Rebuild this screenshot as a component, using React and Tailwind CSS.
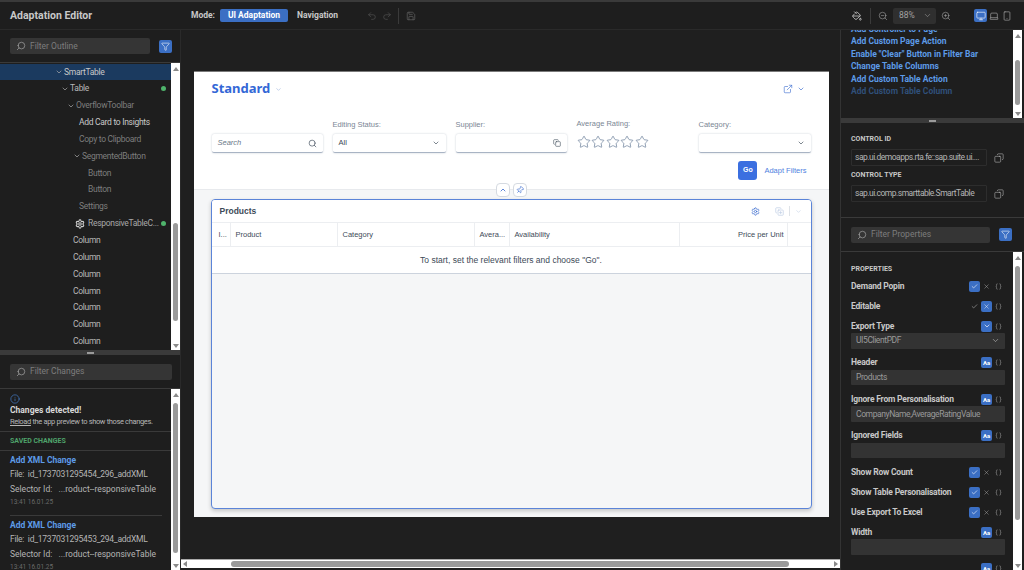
import {
  Braces,
  Check,
  ChevronDown,
  ChevronUp,
  Copy,
  ExternalLink,
  Filter,
  Info,
  Laptop,
  Monitor,
  PaintBucket,
  Pin,
  Redo2,
  Save,
  Search,
  Settings,
  Smartphone,
  Star,
  Undo2,
  X,
  ZoomIn,
  ZoomOut,
  CopyPlus
} from "lucide-react";

function ScrollV({ before, thumb, className = "" }) {
  return (
    <div className={`w-[9px] shrink-0 bg-white flex flex-col items-center ${className}`}>
      <div className="h-0 w-0 mt-[4px] border-x-[3px] border-x-transparent border-b-[4px] border-b-[#8a8a8a]" />
      <div className="shrink-0" style={{ height: before }} />
      <div className="w-[5px] rounded-full bg-[#9a9a9a] shrink-0" style={{ height: thumb }} />
      <div className="flex-1" />
      <div className="h-0 w-0 mb-[2px] border-x-[3px] border-x-transparent border-t-[4px] border-t-[#8a8a8a]" />
    </div>
  );
}

function Splitter() {
  return (
    <div className="h-[5px] shrink-0 bg-[#3a3a3a] flex items-center justify-center">
      <div className="w-[7px] h-[2px] bg-[#9a9a9a]" />
    </div>
  );
}

function FilterInput({ label, className = "" }) {
  return (
    <div className={`h-[16px] bg-[#353535] rounded-[2px] flex items-center gap-[4px] pl-[6px] ${className}`}>
      <Search size={10} strokeWidth={1.5} className="text-[#b0b0b0] -scale-x-100" />
      <span className="text-[8.5px] text-[#7d7d7d]">{label}</span>
    </div>
  );
}

function FunnelButton() {
  return (
    <div className="w-[13px] h-[13px] rounded-[2px] bg-[#3b6fc4] flex items-center justify-center">
      <Filter size={9} strokeWidth={1.5} className="text-white" />
    </div>
  );
}

const treeRows = [
  { text: "SmartTable", pad: 55, chev: true, active: true, color: "text-[#c8c8c8]" },
  { text: "Table", pad: 61, chev: true, dot: true, color: "text-[#b8b8b8]" },
  { text: "OverflowToolbar", pad: 67, chev: true, color: "text-[#7d7d7d]" },
  { text: "Add Card to Insights", pad: 79, color: "text-[#c8c8c8]" },
  { text: "Copy to Clipboard", pad: 79, color: "text-[#7d7d7d]" },
  { text: "SegmentedButton", pad: 73, chev: true, color: "text-[#7d7d7d]" },
  { text: "Button", pad: 88, color: "text-[#7d7d7d]" },
  { text: "Button", pad: 88, color: "text-[#7d7d7d]" },
  { text: "Settings", pad: 79, color: "text-[#7d7d7d]" },
  { text: "ResponsiveTableC...", pad: 75, icon: true, dot: true, color: "text-[#a8a8a8]" },
  { text: "Column", pad: 73, color: "text-[#b8b8b8]" },
  { text: "Column", pad: 73, color: "text-[#b8b8b8]" },
  { text: "Column", pad: 73, color: "text-[#b8b8b8]" },
  { text: "Column", pad: 73, color: "text-[#b8b8b8]" },
  { text: "Column", pad: 73, color: "text-[#b8b8b8]" },
  { text: "Column", pad: 73, color: "text-[#b8b8b8]" },
  { text: "Column", pad: 73, color: "text-[#b8b8b8]" }
];

function TreeRow({ row }) {
  return (
    <div
      className={`h-[16.85px] shrink-0 flex items-center pr-[5px] text-[8.5px] tracking-[-0.3px] ${row.color} ${row.active ? "bg-[#1b3a5f]" : ""}`}
      style={{ paddingLeft: row.pad }}
    >
      {row.chev && <ChevronDown size={8} strokeWidth={2} className="mr-[1px] text-[#b0b0b0]" />}
      {row.icon && <Settings size={10} strokeWidth={2.5} className="mr-[3px] text-[#d0d0d0]" />}
      <span className="flex-1 whitespace-nowrap">{row.text}</span>
      {row.dot && <span className="w-[5px] h-[5px] rounded-full bg-[#4fb36b]" />}
    </div>
  );
}

function ChangeItem({ id }) {
  return (
    <div className="h-[65px] shrink-0 pl-[10px] pr-[9px]">
      <div className="border-b border-[#3a3a3a] h-full pt-[2px]">
        <div className="h-[14px] flex items-center text-[8.5px] font-bold text-[#5d9be8]">Add XML Change</div>
        <div className="h-[15px] flex items-center text-[8.5px] tracking-[-0.25px] text-[#b5b5b5] whitespace-nowrap">File: &nbsp;id_{id}_addXML</div>
        <div className="h-[14px] flex items-center text-[8.5px] text-[#b5b5b5] whitespace-nowrap">Selector Id: &nbsp; ...roduct--responsiveTable</div>
        <div className="h-[13px] flex items-center text-[6.5px] text-[#6a6a6a]">13:41 16.01.25</div>
      </div>
    </div>
  );
}

function LeftPanel() {
  return (
    <aside className="w-[181px] shrink-0 flex flex-col bg-[#1e1e1e] border-r border-[#2a2a2a]">
      <div className="h-[32px] shrink-0 flex items-center pl-[10px] gap-[9px]">
        <FilterInput label="Filter Outline" className="w-[140px]" />
        <FunnelButton />
      </div>
      <div className="h-[288px] shrink-0 flex border-t border-[#3a3a3a] overflow-hidden">
        <div className="flex-1 min-w-0 flex flex-col pt-[.5px]">
          {treeRows.map((row, i) => (
            <TreeRow key={i} row={row} />
          ))}
        </div>
        <ScrollV before={152} thumb={98} />
      </div>
      <Splitter />
      <div className="h-[34px] shrink-0 flex items-center pl-[10px] border-b border-[#3a3a3a]">
        <FilterInput label="Filter Changes" className="w-[162px]" />
      </div>
      <div className="flex-1 flex min-h-0 overflow-hidden">
        <div className="flex-1 flex flex-col min-w-0">
          <div className="h-[43px] shrink-0 pl-[10px] pt-[5px] border-b border-[#3a3a3a]">
            <Info size={10} strokeWidth={1.5} className="text-[#4a86d8]" />
            <div className="text-[8.5px] font-bold text-[#d8d8d8] leading-[13px]">Changes detected!</div>
            <div className="text-[7.5px] tracking-[-0.35px] text-[#b5b5b5] leading-[10px] whitespace-nowrap"><span className="underline">Reload</span> the app preview to show those changes.</div>
          </div>
          <div className="h-[19px] shrink-0 pl-[10px] flex items-center border-b border-[#3a3a3a] text-[7px] font-bold text-[#4fa36b]">SAVED CHANGES</div>
          <ChangeItem id="1737031295454_296" />
          <ChangeItem id="1737031295453_294" />
        </div>
        <ScrollV before={6} thumb={150} />
      </div>
    </aside>
  );
}

function Field({ label, children, className = "", labelClass = "" }) {
  return (
    <div className={className}>
      <div className={`text-[7.5px] text-[#7a8694] leading-[10px] mb-[4px] ${labelClass}`}>{label}</div>
      {children}
    </div>
  );
}

function FieldBox({ children, className = "" }) {
  return (
    <div className={`h-[19px] bg-white rounded-[2px] shadow-[0_0_2px_rgba(120,135,155,0.45)] border-b border-[#a9b4c4] flex items-center justify-between px-[6px] text-[#3d4a58] ${className}`}>
      {children}
    </div>
  );
}

const columns = [
  { name: "I...", w: "w-[19px]", cls: "pl-[7px]" },
  { name: "Product", w: "w-[107px]", cls: "pl-[5px]" },
  { name: "Category", w: "w-[137px]", cls: "pl-[5px]" },
  { name: "Avera...", w: "w-[35px]", cls: "pl-[5px]" },
  { name: "Availability", w: "w-[170px]", cls: "pl-[5px]" },
  { name: "Price per Unit", w: "w-[108px]", cls: "justify-end pr-[3px]" }
];

function PagePreview() {
  return (
    <div className="relative w-[635px] h-[446px] bg-[#f5f6f7] flex flex-col border-t border-[#7a7a7a] font-['Liberation_Sans',sans-serif]">
      <div className="h-[118px] shrink-0 bg-white border-b border-[#e8eaed] pl-[18px] pr-[18px] pt-[9px]">
        <div className="flex items-center justify-between h-[16px]">
          <div className="flex items-center gap-[5px]">
            <span className="text-[13px] font-bold text-[#3367d6] font-['Noto_Sans',sans-serif]">Standard</span>
            <ChevronDown size={7} className="text-[#9db4dc]" />
          </div>
          <div className="flex items-center gap-[4px] text-[#3f6fd0] mr-[6px]">
            <ExternalLink size={10} strokeWidth={1.5} />
            <ChevronDown size={8} strokeWidth={2} />
          </div>
        </div>
        <div className="flex mt-[14px] h-[42px] items-end">
          <FieldBox className="w-[111px]">
            <span className="text-[7.5px] italic text-[#6a7787]">Search</span>
            <Search size={9} strokeWidth={1.75} />
          </FieldBox>
          <Field label="Editing Status:" className="w-[113px] ml-[10px]">
            <FieldBox>
              <span className="text-[7.5px]">All</span>
              <ChevronDown size={8} strokeWidth={2} />
            </FieldBox>
          </Field>
          <Field label="Supplier:" className="w-[111px] ml-[10px]">
            <FieldBox className="justify-end">
              <Copy size={8} strokeWidth={1.75} />
            </FieldBox>
          </Field>
          <Field label="Average Rating:" className="w-[112px] ml-[10px] pb-[2px]" labelClass="mb-[6px]">
            <div className="flex gap-[.5px] h-[16px] text-[#6a7f99]">
              {[0, 1, 2, 3, 4].map((i) => (
                <Star key={i} size={14} strokeWidth={1.25} />
              ))}
            </div>
          </Field>
          <Field label="Category:" className="w-[112px] ml-[10px]">
            <FieldBox className="justify-end">
              <ChevronDown size={8} strokeWidth={2} />
            </FieldBox>
          </Field>
        </div>
        <div className="flex justify-end items-center mt-[8px] mr-[4px] gap-[7px]">
          <div className="w-[19px] h-[19px] rounded-[3px] bg-[#3b6fe0] text-white text-[7px] font-bold flex items-center justify-center">Go</div>
          <span className="text-[7.5px] text-[#4f7fe0]">Adapt Filters</span>
        </div>
      </div>
      <div className="absolute left-[302px] top-[111px] w-[14px] h-[14px] rounded-[4px] bg-white border border-[#d5dae1] flex items-center justify-center text-[#3f6fd0]">
        <ChevronUp size={8} strokeWidth={2.5} />
      </div>
      <div className="absolute left-[319px] top-[111px] w-[14px] h-[14px] rounded-[4px] bg-white border border-[#d5dae1] flex items-center justify-center text-[#3f6fd0]">
        <Pin size={8} strokeWidth={2} className="rotate-45" />
      </div>
      <div className="mx-[17px] mt-[9px] h-[310px] border border-[#5b84d8] rounded-[4px] bg-[#f5f6f7] shadow-[0_2px_4px_rgba(0,0,0,0.2)] overflow-hidden">
        <div className="h-[22px] bg-white flex items-center justify-between pl-[8px] pr-[9px]">
          <span className="text-[8.5px] font-bold text-[#3d4a58]">Products</span>
          <div className="flex items-center text-[#3f6fd0]">
            <Settings size={9} strokeWidth={2} />
            <CopyPlus size={9} className="ml-[15px] text-[#c3d0e6]" />
            <div className="w-px h-[10px] bg-[#dfe3e8] mx-[5px]" />
            <ChevronDown size={7} className="text-[#c3d0e6]" />
          </div>
        </div>
        <div className="h-[25px] bg-white flex border-y border-[#eceef1]">
          {columns.map((col) => (
            <div
              key={col.name}
              className={`${col.w} ${col.cls} shrink-0 flex items-center border-r border-[#eceef1] text-[7.5px] text-[#3d4a58] whitespace-nowrap overflow-hidden`}
            >
              {col.name}
            </div>
          ))}
        </div>
        <div className="h-[27px] bg-white border-b border-[#ccd3dd] flex items-center justify-center text-[8.5px] text-[#3d4a58]">
          To start, set the relevant filters and choose "Go".
        </div>
      </div>
    </div>
  );
}

function Center() {
  return (
    <main className="flex-1 min-w-0 flex flex-col bg-[#1f1f1f]">
      <div className="flex-1 min-h-0 flex justify-center pt-[41px] pl-[1px]">
        <PagePreview />
      </div>
      <div className="h-[9px] mb-[2px] shrink-0 bg-white flex items-center border-t border-[#aaa]">
        <div className="ml-[2px] h-0 w-0 border-y-[3px] border-y-transparent border-r-[4px] border-r-[#8a8a8a]" />
        <div className="ml-[44px] h-[6px] w-[558px] rounded-full bg-[#9a9a9a]" />
        <div className="flex-1" />
        <div className="mr-[2px] h-0 w-0 border-y-[3px] border-y-transparent border-l-[4px] border-l-[#8a8a8a]" />
      </div>
    </main>
  );
}

function IconCell({ active, children, className = "" }) {
  return (
    <div className={`w-[11px] h-[11px] rounded-[2px] flex items-center justify-center ${active ? "bg-[#3b6fc4] text-white" : "text-[#b5b5b5]"} ${className}`}>
      {children}
    </div>
  );
}

function BoolProp({ label, value }) {
  return (
    <div className="h-[20px] flex items-center justify-between">
      <span className="text-[8.5px] tracking-[-0.2px] font-bold text-[#c8c8c8] whitespace-nowrap">{label}</span>
      <div className="flex items-center gap-[1px] mr-[1px]">
        <IconCell active={value}>
          <Check size={7} strokeWidth={2} />
        </IconCell>
        <IconCell active={!value}>
          <X size={7} strokeWidth={1.5} />
        </IconCell>
        <IconCell>
          <Braces size={7} strokeWidth={1.5} />
        </IconCell>
      </div>
    </div>
  );
}

function TextProp({ label, value, select, kind = "Aa" }) {
  return (
    <div className="h-[36.6px] pt-[3px]">
      <div className="h-[14px] flex items-center justify-between">
        <span className="text-[8.5px] tracking-[-0.2px] font-bold text-[#c8c8c8] whitespace-nowrap">{label}</span>
        <div className="flex items-center gap-[1px] mr-[1px]">
          <IconCell active>
            {kind === "Aa" ? <span className="text-[6px] font-bold">Aa</span> : <ChevronDown size={8} strokeWidth={2} />}
          </IconCell>
          <IconCell>
            <Braces size={7} strokeWidth={1.5} />
          </IconCell>
        </div>
      </div>
      <div className="h-[15.5px] bg-[#333] rounded-[1px] flex items-center justify-between px-[5px] text-[8.5px] tracking-[-0.4px] text-[#9a9a9a] whitespace-nowrap">
        <span>{value}</span>
        {select && <ChevronDown size={9} strokeWidth={1.5} className="text-[#c8c8c8]" />}
      </div>
    </div>
  );
}

function ControlField({ label, value }) {
  return (
    <div className="h-[36px]">
      <div className="h-[10px] flex items-center text-[7px] font-bold text-[#c8c8c8]">{label}</div>
      <div className="flex items-center mt-[5px] gap-[7px]">
        <div className="w-[136px] h-[17px] border border-[#2d2d2d] rounded-[1px] flex items-center pl-[3px] text-[8.5px] tracking-[-0.5px] text-[#b5b5b5] whitespace-nowrap">
          {value}
        </div>
        <Copy size={10} strokeWidth={1.25} className="text-[#c8c8c8] -scale-x-100" />
      </div>
    </div>
  );
}

function RightPanel() {
  const actions = [
    "Add Controller to Page",
    "Add Custom Page Action",
    'Enable "Clear" Button in Filter Bar',
    "Change Table Columns",
    "Add Custom Table Action"
  ];
  return (
    <aside className="w-[184px] shrink-0 flex flex-col bg-[#1e1e1e] border-l border-[#333]">
      <div className="h-[88px] shrink-0 flex overflow-hidden">
        <div className="flex-1 pl-[10px] pb-[32.5px] flex flex-col justify-end">
          {actions.map((a) => (
            <div key={a} className="h-[12.55px] shrink-0 flex items-center text-[8.5px] font-bold text-[#5d9be8] whitespace-nowrap">{a}</div>
          ))}
          <div className="h-[12.55px] shrink-0 flex items-center text-[8.5px] font-bold text-[#30507a] whitespace-nowrap -mb-[12.55px]">Add Custom Table Column</div>
        </div>
        <ScrollV before={22} thumb={45} className="mr-[2px]" />
      </div>
      <Splitter />
      <div className="h-[95px] shrink-0 pl-[10px] pt-[11px] border-b border-[#3a3a3a]">
        <ControlField label="CONTROL ID" value="sap.ui.demoapps.rta.fe::sap.suite.ui...." />
        <ControlField label="CONTROL TYPE" value="sap.ui.comp.smarttable.SmartTable" />
      </div>
      <div className="h-[34px] shrink-0 flex items-center pl-[10px] gap-[9px] border-b border-[#3a3a3a]">
        <FilterInput label="Filter Properties" className="w-[139px]" />
        <FunnelButton />
      </div>
      <div className="flex-1 min-h-0 flex overflow-hidden">
        <div className="flex-1 min-w-0 pl-[10px] pr-[8px] pt-[10px] flex flex-col">
          <div className="h-[14px] shrink-0 flex items-center text-[7px] font-bold text-[#c8c8c8]">PROPERTIES</div>
          <div className="shrink-0">
            <BoolProp label="Demand Popin" value={true} />
            <BoolProp label="Editable" value={false} />
            <TextProp label="Export Type" value="UI5ClientPDF" select kind="select" />
            <TextProp label="Header" value="Products" />
            <TextProp label="Ignore From Personalisation" value="CompanyName,AverageRatingValue" />
            <TextProp label="Ignored Fields" value="" />
            <BoolProp label="Show Row Count" value={true} />
            <BoolProp label="Show Table Personalisation" value={true} />
            <BoolProp label="Use Export To Excel" value={true} />
            <TextProp label="Width" value="" />
            <TextProp label="" value="" />
          </div>
        </div>
        <ScrollV before={6} thumb={254} className="mr-[2px]" />
      </div>
    </aside>
  );
}

function Toolbar() {
  return (
    <header className="h-[28px] shrink-0 flex items-center bg-[#1e1e1e] border-b border-[#2a2a2a] text-[#c8c8c8]">
      <div className="w-[191px] shrink-0 pl-[10px] text-[10.5px] font-bold">Adaptation Editor</div>
      <span className="w-[29px] text-[8.5px] font-bold">Mode:</span>
      <div className="w-[68px] h-[13px] rounded-[2px] bg-[#3b6fc4] text-white text-[8.5px] font-bold flex items-center justify-center">UI Adaptation</div>
      <span className="w-[79px] pl-[9px] text-[8.5px] font-bold">Navigation</span>
      <Undo2 size={10} strokeWidth={1.5} className="text-[#555]" />
      <Redo2 size={10} strokeWidth={1.5} className="ml-[5px] text-[#555]" />
      <div className="w-px h-[16px] bg-[#3a3a3a] ml-[6px]" />
      <Save size={10} strokeWidth={1.5} className="ml-[7px] text-[#6a6a6a]" />
      <div className="flex-1" />
      <PaintBucket size={10} strokeWidth={2} />
      <div className="w-px h-[16px] bg-[#3a3a3a] ml-[8px]" />
      <ZoomOut size={10} strokeWidth={1.25} className="ml-[7px] text-[#b5b5b5]" />
      <div className="w-[43px] h-[16px] ml-[5px] rounded-[2px] bg-[#2f2f2f] flex items-center justify-between pl-[6px] pr-[4px] text-[8.5px] text-[#a0a0a0]">
        <span>88%</span>
        <ChevronDown size={9} strokeWidth={1.5} />
      </div>
      <ZoomIn size={10} strokeWidth={1.25} className="ml-[5px] text-[#b5b5b5]" />
      <div className="w-[13px] h-[13px] ml-[23px] rounded-[2px] bg-[#3b6fc4] flex items-center justify-center text-white">
        <Monitor size={10} strokeWidth={1.5} />
      </div>
      <Laptop size={10} strokeWidth={1.25} className="ml-[2px] text-[#c8c8c8]" />
      <Smartphone size={10} strokeWidth={1.25} className="ml-[3px] mr-[12px] text-[#c8c8c8]" />
    </header>
  );
}

export default function App() {
  return (
    <div className="w-[1024px] h-[570px] overflow-hidden flex flex-col bg-[#1e1e1e] border-t-2 border-[#3a3a3a] font-['Roboto',sans-serif]">
      <Toolbar />
      <div className="flex-1 min-h-0 flex">
        <LeftPanel />
        <Center />
        <RightPanel />
      </div>
    </div>
  );
}
